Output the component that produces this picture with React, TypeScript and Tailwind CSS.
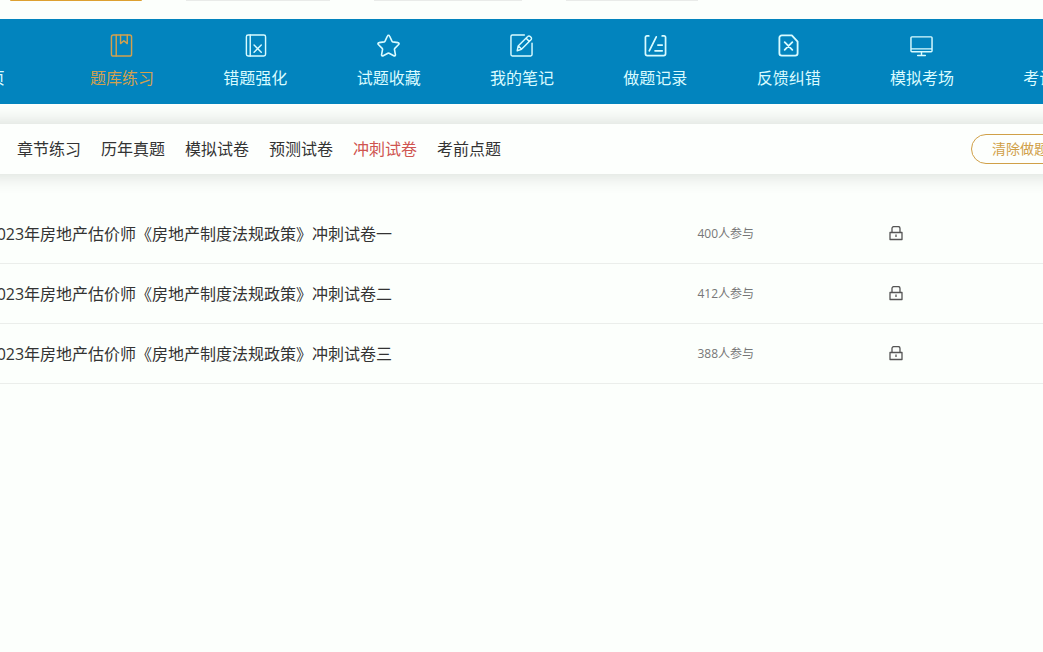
import React from "react";

type IconProps = { children: React.ReactNode };

function NavIcon({ children }: IconProps) {
  return (
    <svg
      viewBox="0 0 24 24"
      className="size-[23px]"
      fill="none"
      stroke="currentColor"
      strokeWidth="1.5"
      strokeLinecap="round"
      strokeLinejoin="round"
      aria-hidden="true"
    >
      {children}
    </svg>
  );
}

const navItems = [
  {
    label: "首页",
    icon: <path d="M1 12 12 2l11 10M4 10v12h16V10M9 22v-8h6v8" />,
  },
  {
    label: "题库练习",
    active: true,
    icon: (
      <>
        <rect x="1.5" y="1" width="21" height="22" rx="2" />
        <path d="M6.5 1v22M11 1v9l3.5-3 3.5 3V1" />
      </>
    ),
  },
  {
    label: "错题强化",
    icon: (
      <>
        <rect x="2.5" y="1" width="20" height="22" rx="1.8" />
        <path d="M6.5 1v22M10.5 11.5l7.5 7.5M18 11.5 10.5 19" />
      </>
    ),
  },
  {
    label: "试题收藏",
    icon: (
      <path
        strokeWidth="1.7"
        d="M10.9 2.1a1.2 1.2 0 0 1 2.2 0l2.5 5.4c.2.4.5.6.9.7l5.4.8c1 .1 1.4 1.3.7 2l-4 4c-.3.3-.4.7-.4 1.1l1 5.4c.2 1-.8 1.7-1.7 1.2l-4.9-2.6a1.3 1.3 0 0 0-1.2 0l-4.9 2.6c-.9.5-1.9-.2-1.7-1.2l1-5.4c0-.4-.1-.8-.4-1.1l-4-4c-.7-.7-.3-1.9.7-2l5.4-.8c.4-.1.7-.3.9-.7z"
      />
    ),
  },
  {
    label: "我的笔记",
    icon: (
      <>
        <path d="M15 1H2.500A1.500 1.500 0 0 0 1 2.500v19A1.500 1.500 0 0 0 2.500 23h19a1.500 1.500 0 0 0 1.500-1.500V9.500" />
        <path d="M7.500 17.500l1-5L18.500 2.600a1.800 1.800 0 0 1 2.600 0l.8.800a1.800 1.800 0 0 1 0 2.600L12 16zM16.800 4.400l3.300 3.300M8.800 12.500 12 15.700" />
      </>
    ),
  },
  {
    label: "做题记录",
    icon: (
      <path
        strokeWidth="1.8"
        d="M5 2H3a1.500 1.500 0 0 0-1.500 1.500v17A2 2 0 0 0 3.500 22.500h17a2 2 0 0 0 2-2v-17A1.500 1.500 0 0 0 21 2h-2M12.800 3 5.500 17.500M14.500 11.500H19M11.500 17.500H19"
      />
    ),
  },
  {
    label: "反馈纠错",
    icon: (
      <path
        strokeWidth="1.9"
        d="M15.500 1.500H5a2.500 2.500 0 0 0-2.500 2.500v16A2.500 2.500 0 0 0 5 22.500h14a2.500 2.500 0 0 0 2.500-2.500V8zM8 8.500l8 8M16 8.500l-8 8"
      />
    ),
  },
  {
    label: "模拟考场",
    icon: (
      <path d="M2 3h20a1 1 0 0 1 1 1v13.500a1 1 0 0 1-1 1H2a1 1 0 0 1-1-1V4a1 1 0 0 1 1-1zM1 15.500h22M12 18.500v4M8 22.500h8" />
    ),
  },
  {
    label: "考试指南",
    icon: (
      <>
        <rect x="1" y="1" width="22" height="22" rx="1.5" />
        <path d="M6 8h12M6 12h12M6 16h8" />
      </>
    ),
  },
];

const tabs = ["章节练习", "历年真题", "模拟试卷", "预测试卷", "冲刺试卷", "考前点题"];

const papers = [
  { no: "一", count: 400 },
  { no: "二", count: 412 },
  { no: "三", count: 388 },
];

function LockIcon() {
  return (
    <svg
      viewBox="0 0 16 16"
      className="size-4"
      fill="none"
      stroke="currentColor"
      strokeWidth="1.3"
      strokeLinejoin="round"
      aria-hidden="true"
    >
      <rect x="2" y="6.5" width="12" height="7" />
      <path d="M4 6.5V2.500a2 2 0 0 1 2-2h4a2 2 0 0 1 2 2v4M8 8.500V11" />
    </svg>
  );
}

export default function App() {
  return (
    <div className="min-h-screen overflow-hidden bg-[#fcfffc] font-['Open_Sans','Noto_Sans_CJK_SC',sans-serif] text-[#333]">
      <div className="flex h-[19px] justify-center">
        <div className="flex w-[1200px] shrink-0 items-start gap-11 pl-[88px]">
          <div className="h-px w-[132px] rounded-b bg-[#dda030]" />
          <div className="h-px w-36 bg-[#e9ebe9]" />
          <div className="h-px w-37 bg-[#e9ebe9]" />
          <div className="h-px w-33 bg-[#e9ebe9]" />
        </div>
      </div>

      <nav className="flex justify-center bg-[#0284be] pl-px">
        <div className="grid w-[1200px] shrink-0 grid-cols-9">
          {navItems.map((item) => (
            <a
              key={item.label}
              href="#"
              className={
                item.active
                  ? "flex h-[85px] flex-col items-center gap-[9px] pt-[15px] text-[#d3a14e]"
                  : "flex h-[85px] flex-col items-center gap-[9px] pt-[15px] text-[#d9fbff]"
              }
            >
              <NavIcon>{item.icon}</NavIcon>
              <span className="text-base leading-6">{item.label}</span>
            </a>
          ))}
        </div>
      </nav>

      <div className="-mx-5 mt-5 flex justify-center bg-[#fdfffd] pl-px shadow-[0_0_20px_rgba(0,20,10,0.17)]">
        <div className="flex h-[50px] w-[1200px] shrink-0 items-center justify-between pr-[25px] pl-[95px]">
          <div className="flex gap-5">
            {tabs.map((tab) => (
              <a
                key={tab}
                href="#"
                className={
                  tab === "冲刺试卷"
                    ? "text-base leading-6 text-[#cf5450]"
                    : "text-base leading-6"
                }
              >
                {tab}
              </a>
            ))}
          </div>
          <button
            type="button"
            className="h-[30px] rounded-full border border-[#d0a048] px-5 text-sm text-[#d0a048]"
          >
            清除做题记录
          </button>
        </div>
      </div>

      <main className="mt-[30px] flex justify-center">
        <ul className="w-[1200px] shrink-0">
          {papers.map((paper) => (
            <li
              key={paper.no}
              className="flex h-[60px] items-center border-b border-[#ebeeeb] pl-[66px]"
            >
              <a href="#" className="w-[710px] text-base">
                2023年房地产估价师《房地产制度法规政策》冲刺试卷{paper.no}
              </a>
              <span className="w-[190px] text-xs text-[#777]">{paper.count}人参与</span>
              <button type="button" aria-label="解锁试卷" className="text-[#555]">
                <LockIcon />
              </button>
            </li>
          ))}
        </ul>
      </main>
    </div>
  );
}
